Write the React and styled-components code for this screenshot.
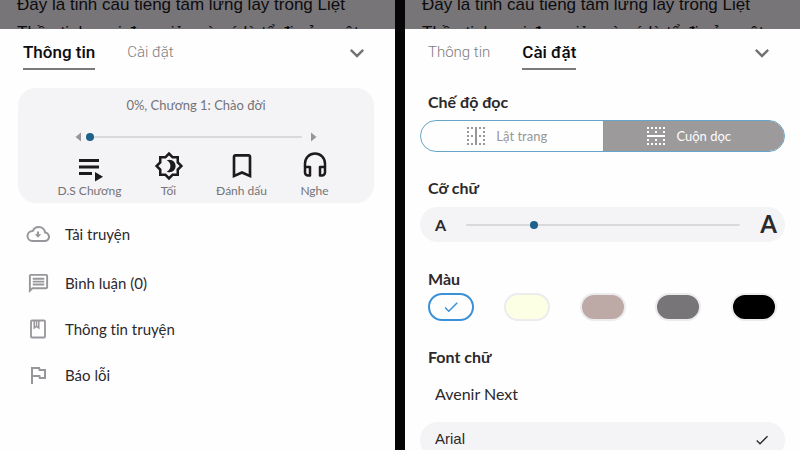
import React, { useState } from 'react';
import styled, { createGlobalStyle, css } from 'styled-components';
import {
  MdKeyboardArrowDown,
  MdOutlineBrightness4,
  MdBookmarkBorder,
  MdOutlineMessage,
  MdOutlineFlag,
  MdBorderVertical,
  MdBorderHorizontal,
  MdCheck,
} from 'react-icons/md';

const GlobalStyle = createGlobalStyle`
  *, *::before, *::after { box-sizing: border-box; }
  body { margin: 0; background: #060606; }
  button, input { font: inherit; color: inherit; margin: 0; }
  button { border: 0; padding: 0; background: none; cursor: pointer; }
  svg { display: block; }
`;

const Screens = styled.main`
  display: grid;
  grid-template-columns: minmax(0, 1fr) minmax(0, 1fr);
  column-gap: 10px;
  height: 100vh;
  overflow: hidden;
  background: #060606;
  font-family: Lato, 'Noto Sans', sans-serif;
  color: #2b292c;
  font-variant-ligatures: none;
`;

const Phone = styled.section`
  display: flex;
  flex-direction: column;
  min-width: 0;
  background: #fefefe;
`;

const StoryText = styled.p`
  flex: none;
  margin: 0;
  height: 29px;
  padding: 0 17px;
  overflow: hidden;
  background: #777578;
  color: #0c0b0d;
  font-family: 'Liberation Sans', sans-serif;
  font-size: 17px;
  line-height: 28px;
  white-space: nowrap;
`;

const StoryLine = styled.span`
  display: block;

  &:first-child { margin-top: -9px; }
`;

const TabBar = styled.div`
  display: flex;
  align-items: center;
  flex: none;
  gap: 32px;
  height: 47px;
  padding: 0 24px 0 23px;
`;

const Tab = styled.button`
  height: 34px;
  border-bottom: 2px solid ${(p) => (p.$active ? '#7b797c' : 'transparent')};
  font-family: Roboto, sans-serif;
  font-size: ${(p) => (p.$active ? 17 : 15)}px;
  line-height: 32px;
  font-weight: ${(p) => (p.$active ? 500 : 300)};
  color: ${(p) => (p.$active ? '#0c0b0d' : '#7d7b7e')};
`;

const CloseButton = styled.button`
  margin-left: auto;
  color: #737174;
`;

const ProgressCard = styled.div`
  flex: none;
  margin: 12px 21px 4px 18px;
  padding-bottom: 4px;
  border-radius: 18px;
  background: #f4f3f6;
  color: #757376;
`;

const Chapter = styled.p`
  margin: 0;
  padding-top: 6px;
  font-size: 13px;
  line-height: 22px;
  text-align: center;
`;

const Seek = styled.div`
  display: flex;
  align-items: center;
  gap: 5px;
  height: 16px;
  margin: 13px 57px 0;
  color: #98969a;

  input { margin-right: 4px; }
`;

const Range = styled.input.attrs({ type: 'range' })`
  flex: 1;
  min-width: 0;
  height: 16px;
  appearance: none;
  background: transparent;

  &::-webkit-slider-runnable-track {
    height: 2px;
    border-radius: 1px;
    background: #dad8db;
  }
  &::-webkit-slider-thumb {
    appearance: none;
    width: 8px;
    height: 8px;
    margin-top: -3px;
    border-radius: 50%;
    background: #1c628a;
  }
`;

const Actions = styled.div`
  display: grid;
  grid-template-columns: 85fr 73fr 73fr 73fr;
  margin: 5px 23px 0 29px;
`;

const Action = styled.button`
  display: flex;
  flex-direction: column;
  align-items: center;
  font-size: 12px;
  line-height: 17px;
  white-space: nowrap;
`;

const ActionIcon = styled.span`
  display: grid;
  place-items: center;
  width: 32px;
  height: 32px;
  color: #1c1a1d;
`;

const Menu = styled.ul`
  margin: 0;
  padding: 0;
  list-style: none;

  li:first-child button { height: 53px; }
`;

const MenuButton = styled.button`
  display: grid;
  grid-template-columns: 24px 1fr;
  align-items: center;
  column-gap: 15px;
  width: 100%;
  height: 46px;
  padding: 0 26px;
  font-size: 15px;
  line-height: 20px;
  text-align: left;

  svg {
    justify-self: center;
    color: #98969a;
  }
`;

const Settings = styled.div`
  display: flex;
  flex-direction: column;
  padding: 15px 15px 0;
`;

const Group = styled.fieldset`
  flex: none;
  min-width: 0;
  margin: 0;
  padding: 0;
  border: 0;
`;

const groupTitle = css`
  display: block;
  padding: 0 8px;
  font-size: 16px;
  line-height: 22px;
  font-weight: 700;
`;

const GroupTitle = styled.legend`${groupTitle}`;
const FieldTitle = styled.label`${groupTitle}`;

const HiddenRadio = styled.input.attrs({ type: 'radio' })`
  width: 0;
  height: 0;
  appearance: none;
`;

const Segments = styled.div`
  display: grid;
  grid-template-columns: 1fr 1fr;
  height: 32px;
  margin: 7px 0 25px;
  overflow: hidden;
  border: 1px solid #66a5c8;
  border-radius: 16px;
`;

const Segment = styled.label`
  display: flex;
  align-items: center;
  justify-content: center;
  gap: 8px;
  padding-right: 20px;
  font-size: 13px;
  cursor: pointer;
  color: ${(p) => (p.$active ? '#fefefe' : '#989699')};
  background: ${(p) => (p.$active ? '#9c9a9b' : 'transparent')};
  border-left: ${(p) => (p.$active ? '1px solid #66a5c8' : '0')};
`;

const SizePicker = styled.div`
  display: flex;
  align-items: center;
  height: 35px;
  margin: 8px 0 26px;
  padding: 0 8px 0 15px;
  border-radius: 18px;
  background: #f4f3f6;

  input { margin: 0 20px; }
`;

const Letter = styled.span`
  font-size: ${(p) => (p.$large ? 24 : 16)}px;
  padding-bottom: ${(p) => (p.$large ? 2 : 0)}px;
  font-weight: 700;
  line-height: 32px;
`;

const Swatches = styled.div`
  display: flex;
  justify-content: space-between;
  margin: 3px 8px 25px;
`;

const Swatch = styled.label`
  display: flex;
  align-items: center;
  justify-content: center;
  width: 46px;
  height: 28px;
  border: 2px solid ${(p) => (p.$active ? '#3b91d8' : '#ecebee')};
  border-radius: 14px;
  background: ${(p) => p.$color};
  color: #3b91d8;
  cursor: pointer;
`;

const FontOption = styled.label`
  display: flex;
  align-items: center;
  justify-content: space-between;
  height: 36px;
  margin-top: 9px;
  padding: 0 15px;
  border-radius: 18px;
  background: ${(p) => (p.$active ? '#f4f3f6' : 'transparent')};
  font-family: ${(p) => p.$family};
  font-size: ${(p) => p.$size}px;
  line-height: 20px;
  cursor: pointer;
`;

const FontName = styled.span`
  flex: 1;
  padding-bottom: 2px;
`;

const ArrowIcon = ({ flip }) => (
  <svg width="6" height="10" viewBox="0 0 6 10" aria-hidden="true">
    <path d={flip ? 'M0 0.5v9L5.5 5z' : 'M6 0.5v9L0.5 5z'} fill="currentColor" />
  </svg>
);

const ChapterListIcon = () => (
  <svg width="32" height="32" viewBox="0 0 32 32" aria-hidden="true" fill="currentColor">
    <path d="M5 9h20v3H5zM5 15.500h20v3H5zM5 22h13v3H5zM21 22v9.500l8-4.800z" />
  </svg>
);

const HeadphonesIcon = () => (
  <svg width="32" height="32" viewBox="0 0 32 32" fill="none" stroke="currentColor" strokeWidth="2.5" strokeLinejoin="round" aria-hidden="true">
    <path d="M6 17v-3.500a10 10 0 0 1 20 0V17" />
    <path d="M6 17h5v8.500H9a3 3 0 0 1-3-3zM26 17h-5v8.500h2a3 3 0 0 0 3-3z" />
  </svg>
);

const CloudIcon = () => (
  <svg width="24" height="18" viewBox="0 0 24 18" fill="none" stroke="currentColor" strokeWidth="2" strokeLinejoin="round" aria-hidden="true">
    <path d="M6.500 16h12a4.200 4.200 0 0 0 .6-8.400C18.700 4.200 16 2 12.800 2 10 2 7.800 3.400 6.800 6 3.800 6 1.500 8.200 1.500 11s2.200 5 5 5z" />
    <path d="M12 6.500v3.500" strokeWidth="2.200" />
    <path d="M8.700 9.200h6.600L12 12.800z" fill="currentColor" stroke="none" />
  </svg>
);

const BookIcon = () => (
  <svg width="18" height="20" viewBox="0 0 18 20" fill="none" stroke="currentColor" aria-hidden="true">
    <rect x="2" y="1.500" width="14" height="17" rx="1" strokeWidth="1.800" />
    <path d="M5.200 2v7l2.300-1.800L9.800 9V2M7.500 2v5" strokeWidth="1.500" />
  </svg>
);

const storyLines = [
  'Đây là tinh cầu tiếng tăm lừng lẫy trong Liệt',
  'Thần tinh, nơi đơn giản và có là tổ đi của một',
];

const actions = [
  { label: 'D.S Chương', icon: <ChapterListIcon /> },
  { label: 'Tối', icon: <MdOutlineBrightness4 size={30} /> },
  { label: 'Đánh dấu', icon: <MdBookmarkBorder size={32} /> },
  { label: 'Nghe', icon: <HeadphonesIcon /> },
];

const menu = [
  { label: 'Tải truyện', icon: <CloudIcon /> },
  { label: 'Bình luận (0)', icon: <MdOutlineMessage size={23} /> },
  { label: 'Thông tin truyện', icon: <BookIcon /> },
  { label: 'Báo lỗi', icon: <MdOutlineFlag size={24} /> },
];

const modes = [
  { label: 'Lật trang', icon: <MdBorderVertical size={24} /> },
  { label: 'Cuộn dọc', icon: <MdBorderHorizontal size={24} /> },
];

const colors = [
  { name: 'Trắng', value: '#fefefe' },
  { name: 'Vàng nhạt', value: '#fdffe4' },
  { name: 'Nâu nhạt', value: '#bdaaa7' },
  { name: 'Xám', value: '#777578' },
  { name: 'Đen', value: '#000000' },
];

const fonts = [
  { name: 'Avenir Next', family: "Lato, 'Noto Sans', sans-serif", size: 16 },
  { name: 'Arial', family: "'Liberation Sans', sans-serif", size: 15 },
];

const tabs = ['Thông tin', 'Cài đặt'];

function Header({ active }) {
  return (
    <>
      <StoryText>
        {storyLines.map((line) => (
          <StoryLine key={line}>{line}</StoryLine>
        ))}
      </StoryText>
      <TabBar role="tablist">
        {tabs.map((tab) => (
          <Tab key={tab} type="button" role="tab" aria-selected={tab === active} $active={tab === active}>
            {tab}
          </Tab>
        ))}
        <CloseButton type="button" aria-label="Đóng">
          <MdKeyboardArrowDown size={28} />
        </CloseButton>
      </TabBar>
    </>
  );
}

function InfoScreen() {
  const [progress, setProgress] = useState(0);
  return (
    <Phone>
      <Header active="Thông tin" />
      <ProgressCard>
        <Chapter>{progress}%, Chương 1: Chào đời</Chapter>
        <Seek>
          <button type="button" aria-label="Chương trước"><ArrowIcon /></button>
          <Range aria-label="Tiến độ" value={progress} onChange={(e) => setProgress(Number(e.target.value))} />
          <button type="button" aria-label="Chương sau"><ArrowIcon flip /></button>
        </Seek>
        <Actions>
          {actions.map((a) => (
            <Action key={a.label} type="button">
              <ActionIcon>{a.icon}</ActionIcon>
              {a.label}
            </Action>
          ))}
        </Actions>
      </ProgressCard>
      <Menu>
        {menu.map((m) => (
          <li key={m.label}>
            <MenuButton type="button">{m.icon}{m.label}</MenuButton>
          </li>
        ))}
      </Menu>
    </Phone>
  );
}

function SettingsScreen() {
  const [mode, setMode] = useState('Cuộn dọc');
  const [size, setSize] = useState(24);
  const [color, setColor] = useState('Trắng');
  const [font, setFont] = useState('Arial');
  return (
    <Phone>
      <Header active="Cài đặt" />
      <Settings>
        <Group>
          <GroupTitle>Chế độ đọc</GroupTitle>
          <Segments>
            {modes.map((m) => (
              <Segment key={m.label} $active={mode === m.label}>
                <HiddenRadio name="mode" checked={mode === m.label} onChange={() => setMode(m.label)} />
                {m.icon}
                {m.label}
              </Segment>
            ))}
          </Segments>
        </Group>
        <FieldTitle htmlFor="font-size">Cỡ chữ</FieldTitle>
        <SizePicker>
          <Letter>A</Letter>
          <Range id="font-size" value={size} onChange={(e) => setSize(Number(e.target.value))} />
          <Letter $large>A</Letter>
        </SizePicker>
        <Group>
          <GroupTitle>Màu</GroupTitle>
          <Swatches>
            {colors.map((c) => (
              <Swatch key={c.name} $color={c.value} $active={color === c.name}>
                <HiddenRadio name="color" aria-label={c.name} checked={color === c.name} onChange={() => setColor(c.name)} />
                {color === c.name && <MdCheck size={18} />}
              </Swatch>
            ))}
          </Swatches>
        </Group>
        <Group>
          <GroupTitle>Font chữ</GroupTitle>
          {fonts.map((f) => (
            <FontOption key={f.name} $active={font === f.name} $family={f.family} $size={f.size}>
              <HiddenRadio name="font" checked={font === f.name} onChange={() => setFont(f.name)} />
              <FontName>{f.name}</FontName>
              {font === f.name && <MdCheck size={16} />}
            </FontOption>
          ))}
        </Group>
      </Settings>
    </Phone>
  );
}

export default function App() {
  return (
    <>
      <GlobalStyle />
      <Screens>
        <InfoScreen />
        <SettingsScreen />
      </Screens>
    </>
  );
}
